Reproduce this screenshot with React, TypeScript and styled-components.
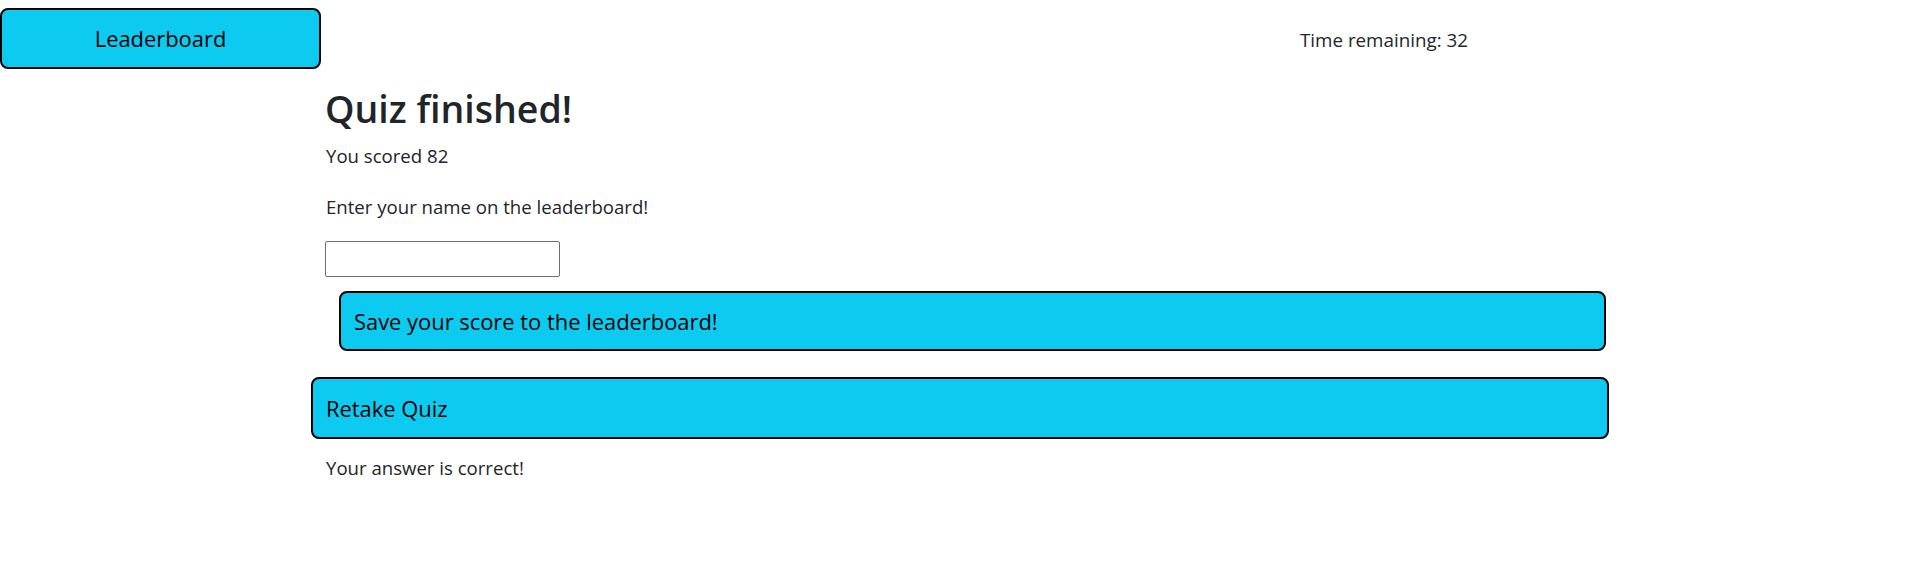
import React from 'react';
import styled, {createGlobalStyle} from 'styled-components';

const GlobalStyle = createGlobalStyle`
  body {
    margin: 0;
    background: #ffffff;
    font-family: 'Open Sans', 'Noto Sans', sans-serif;
    color: #212529;
  }
`;

const App = () => (
  <Page>
    <GlobalStyle/>
    <Header>
      <QuizButton width={321} height={61} align="center">
        Leaderboard
      </QuizButton>
      <Timer>Time remaining: 32</Timer>
    </Header>
    <Main>
      <Title>Quiz finished!</Title>
      <Text gap={11}>You scored 82</Text>
      <Text gap={23}>Enter your name on the leaderboard!</Text>
      <NameInput type="text"/>
      <QuizButton width={1267} height={60} offset={13} gap={14} align="left">
        Save your score to the leaderboard!
      </QuizButton>
      <QuizButton width={1298} height={62} offset={-15} gap={26} align="left">
        Retake Quiz
      </QuizButton>
      <Text gap={15}>Your answer is correct!</Text>
    </Main>
  </Page>
);

export default App;

const Page = styled.div`
  width: 1920px;
  min-height: 568px;
`;

const Header = styled.header`
  display: flex;
  flex-direction: row;
  align-items: center;
  padding-top: 8px;
`;

const Timer = styled.span`
  margin-left: 979px;
  margin-top: 3px;
  font-size: 18.8px;
  line-height: 28px;
`;

const Main = styled.main`
  display: flex;
  flex-direction: column;
  align-items: flex-start;
  padding-left: 326px;
`;

const Title = styled.h2`
  margin: 18px 0 0 -1px;
  font-size: 37.5px;
  line-height: 44px;
  font-weight: 600;
  color: #212529;
`;

const Text = styled.p<{gap: number}>`
  margin: ${p => p.gap}px 0 0 0;
  font-size: 18.6px;
  line-height: 28px;
`;

const NameInput = styled.input`
  box-sizing: border-box;
  width: 235px;
  height: 36px;
  margin: 20px 0 0 -1px;
  border: 1px solid #6f6f6f;
  border-radius: 2px;
  padding: 1px 2px;
  font-family: inherit;
  font-size: 16px;
`;

const QuizButton = styled.button<{
  width: number;
  height: number;
  offset?: number;
  gap?: number;
  align: 'left' | 'center';
}>`
  box-sizing: border-box;
  display: flex;
  align-items: center;
  justify-content: ${p => (p.align === 'center' ? 'center' : 'flex-start')};
  width: ${p => p.width}px;
  height: ${p => p.height}px;
  margin: ${p => p.gap || 0}px 0 0 ${p => p.offset || 0}px;
  padding: 0 13px;
  background: #0dcaf0;
  border: 2px solid #000000;
  border-radius: 8px;
  font-family: 'Open Sans', 'Noto Sans', sans-serif;
  font-size: 21.9px;
  color: #000000;
  cursor: pointer;
`;
